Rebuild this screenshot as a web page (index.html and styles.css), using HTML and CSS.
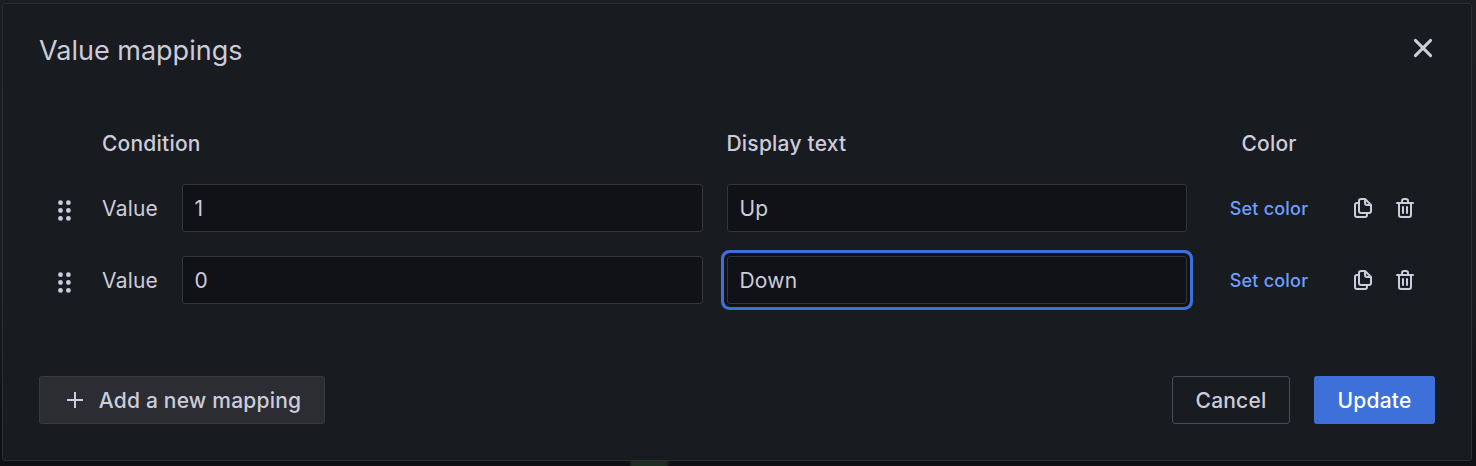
FILE: index.html
```html
<!DOCTYPE html>
<html lang="en">
<head>
<meta charset="utf-8">
<title>Value mappings</title>
<link rel="stylesheet" href="styles.css">
</head>
<body>
<svg class="symbols" width="0" height="0" aria-hidden="true">
  <symbol id="copy" viewBox="0 0 24 24"><path d="M21,8.94a1.31,1.31,0,0,0-.06-.27l0-.09a1.07,1.07,0,0,0-.19-.28h0l-6-6h0a1.07,1.07,0,0,0-.28-.19.32.32,0,0,0-.09,0A.88.88,0,0,0,14.05,2H10A3,3,0,0,0,7,5V6H6A3,3,0,0,0,3,9V19a3,3,0,0,0,3,3h8a3,3,0,0,0,3-3V18h1a3,3,0,0,0,3-3V9S21,9,21,8.94ZM15,5.41,17.59,8H16a1,1,0,0,1-1-1ZM15,19a1,1,0,0,1-1,1H6a1,1,0,0,1-1-1V9A1,1,0,0,1,6,8H7v7a3,3,0,0,0,3,3h5Zm4-4a1,1,0,0,1-1,1H10a1,1,0,0,1-1-1V5a1,1,0,0,1,1-1h3V7a3,3,0,0,0,3,3h3Z"/></symbol>
  <symbol id="trash" viewBox="0 0 24 24"><path d="M10,18a1,1,0,0,0,1-1V11a1,1,0,0,0-2,0v6A1,1,0,0,0,10,18ZM20,6H16V5a3,3,0,0,0-3-3H11A3,3,0,0,0,8,5V6H4A1,1,0,0,0,4,8H5V19a3,3,0,0,0,3,3h8a3,3,0,0,0,3-3V8h1a1,1,0,0,0,0-2ZM10,5a1,1,0,0,1,1-1h2a1,1,0,0,1,1,1V6H10Zm7,14a1,1,0,0,1-1,1H8a1,1,0,0,1-1-1V8H17Zm-3-1a1,1,0,0,0,1-1V11a1,1,0,0,0-2,0v6A1,1,0,0,0,14,18Z"/></symbol>
  <symbol id="grip" viewBox="0 0 24 24"><circle cx="8.5" cy="4.7" r="2.4"/><circle cx="16.4" cy="4.7" r="2.4"/><circle cx="8.5" cy="12.5" r="2.4"/><circle cx="16.4" cy="12.5" r="2.4"/><circle cx="8.5" cy="20.4" r="2.4"/><circle cx="16.4" cy="20.4" r="2.4"/></symbol>
</svg>
<div class="modal">
  <header class="header">
    <h1 class="title">Value mappings</h1>
    <button class="close" aria-label="Close"><svg width="24" height="24" viewBox="0 0 24 24"><path d="M4.4 4.4 19.6 19.6M19.6 4.4 4.4 19.6"/></svg></button>
  </header>
  <div class="grid labels">
    <span class="condition-label">Condition</span><span class="display-label">Display text</span><span class="color-label">Color</span>
  </div>
  <div class="grid row">
    <svg class="icon grip"><use href="#grip"/></svg>
    <label class="condition"><span class="kind">Value</span><span class="field">1</span></label>
    <span class="field display">Up</span>
    <a class="set-color">Set color</a>
    <span class="actions"><svg class="icon"><use href="#copy"/></svg><svg class="icon"><use href="#trash"/></svg></span>
  </div>
  <div class="grid row">
    <svg class="icon grip"><use href="#grip"/></svg>
    <label class="condition"><span class="kind">Value</span><span class="field">0</span></label>
    <span class="field display focused">Down</span>
    <a class="set-color">Set color</a>
    <span class="actions"><svg class="icon"><use href="#copy"/></svg><svg class="icon"><use href="#trash"/></svg></span>
  </div>
  <footer class="footer">
    <button class="button add"><svg width="24" height="24" viewBox="0 0 24 24"><path d="M12 4v16M4 12h16"/></svg>Add a new mapping</button>
    <button class="button cancel">Cancel</button>
    <button class="button update">Update</button>
  </footer>
</div>
</body>
</html>
```
FILE: styles.css
```css
* { box-sizing: border-box; }

body {
  margin: 0;
  height: 466px;
  padding: 3px 4px 5px 2px;
  overflow: hidden;
  color: #ccccdc;
  font: 400 21px/32px Inter, sans-serif;
  letter-spacing: 0.21px;
  background:
    linear-gradient(90deg, transparent 629px, #1e2d22 632px, #1e2d22 666px, transparent 670px) 0 100% / 100% 5px no-repeat,
    linear-gradient(#1d1e21, #1b1c1f 60%, #0e0f14 98%);
}

.symbols { display: block; }

.modal {
  height: 458px;
  padding: 0 36px;
  border: 1px solid #2d2e33;
  border-radius: 3px;
  background: #181b1f;
}

.header {
  display: flex;
  justify-content: space-between;
  height: 123px;
  padding-top: 32px;
}

.title {
  margin: 0;
  font-size: 27px;
  font-weight: 400;
  line-height: 30px;
  letter-spacing: 0;
}

.close {
  width: 24px;
  height: 24px;
  padding: 0;
  border: 0;
  background: none;
}

.close path {
  fill: none;
  stroke: #ccccdc;
  stroke-width: 3;
  stroke-linecap: round;
}

.grid {
  display: grid;
  grid-template-columns:
    [grip] 63px [condition] 601px 24px [display] 460px
    24px [color] 116px 24px [actions] 66px;
  align-items: center;
}

.grip { grid-column: grip; }
.condition, .condition-label { grid-column: condition; }
.display, .display-label { grid-column: display; }
.set-color, .color-label { grid-column: color; text-align: center; }
.actions { grid-column: actions; display: flex; gap: 18px; }

.labels {
  height: 33px;
  margin-bottom: 24px;
  font-weight: 500;
}

.display-label { margin-left: -0.5px; }

.row {
  height: 48px;
  margin-bottom: 24px;
}

.icon {
  display: block;
  width: 24px;
  height: 24px;
  fill: #ccccdc;
}

.grip { margin: 3px 0 0 13px; }

.condition { display: flex; align-items: center; }
.kind { width: 80px; padding-top: 2px; }

.field {
  display: block;
  height: 48px;
  padding: 8px 11.5px 6px;
  border: 1px solid #343539;
  border-radius: 3px;
  background: #111217;
}

.condition .field { flex: 1; }
.focused { box-shadow: 0 0 0 3px #111217, 0 0 0 6px #3d71d9; }

.set-color {
  padding-top: 2px;
  color: #6e9fff;
  font-size: 18px;
  font-weight: 500;
}

.footer {
  display: flex;
  gap: 24px;
  margin-top: 72px;
}

.button {
  display: flex;
  align-items: center;
  justify-content: center;
  height: 48px;
  padding: 2px 0 0;
  border: 1px solid transparent;
  border-radius: 3px;
  color: #ccccdc;
  font: inherit;
  font-weight: 500;
  letter-spacing: inherit;
}

.add {
  width: 286px;
  gap: 12px;
  margin-right: auto;
  border-color: #38393e;
  background: #2c2d32;
}

.add svg { margin-top: -2px; }
.add path { fill: none; stroke: #ccccdc; stroke-width: 2; }
.cancel { width: 118px; border-color: #4b4c53; background: transparent; }
.update { width: 121px; background: #3d71d9; border: 0; color: #fff; }
```
